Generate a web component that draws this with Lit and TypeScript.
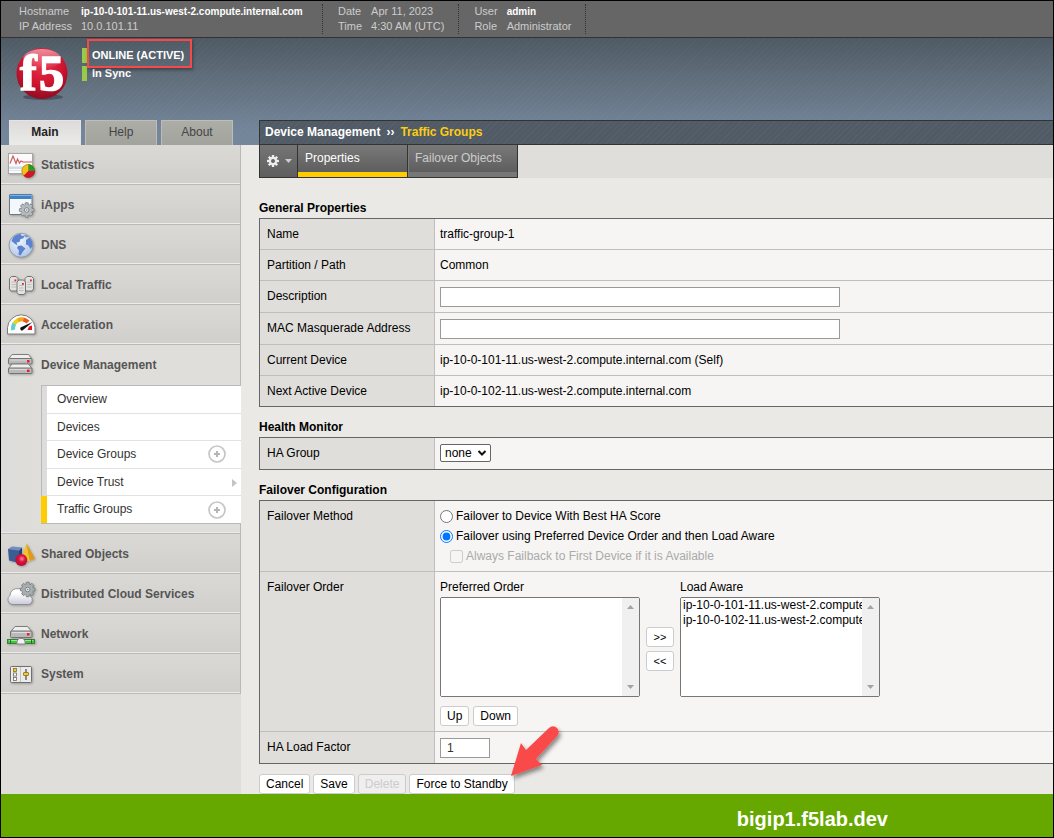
import { LitElement, html, css, svg, nothing } from "lit";
import { customElement, state } from "lit/decorators.js";
import { classMap } from "lit/directives/class-map.js";

interface NavItem {
  label: string;
  icon: string;
}

interface SubItem {
  label: string;
  add?: boolean;
  more?: boolean;
}

const navTop: NavItem[] = [
  { label: "Statistics", icon: "stats" },
  { label: "iApps", icon: "iapps" },
  { label: "DNS", icon: "dns" },
  { label: "Local Traffic", icon: "traffic" },
  { label: "Acceleration", icon: "accel" },
];

const navBottom: NavItem[] = [
  { label: "Shared Objects", icon: "shared" },
  { label: "Distributed Cloud Services", icon: "cloud" },
  { label: "Network", icon: "network" },
  { label: "System", icon: "system" },
];

const subItems: SubItem[] = [
  { label: "Overview" },
  { label: "Devices" },
  { label: "Device Groups", add: true },
  { label: "Device Trust", more: true },
  { label: "Traffic Groups", add: true },
];

const hosts = [
  "ip-10-0-101-11.us-west-2.compute.internal.com",
  "ip-10-0-102-11.us-west-2.compute.internal.com",
];

/* A toothed wheel drawn around (cx, cy). */
const gear = (cx: number, cy: number, r: number, fill: string, edge: string) => svg`
  <g transform="translate(${cx} ${cy})">
    ${[0, 45, 90, 135].map(
      (a) => svg`<rect x="-1.6" y=${-r} width="3.2" height=${r * 2} rx=".8" fill=${fill}
        stroke=${edge} stroke-width=".9" transform="rotate(${a})"/>`
    )}
    <circle r=${r - 2} fill=${fill}/>
    <circle r="2.3" fill="#e8ebeb" stroke=${edge} stroke-width=".9"/>
    <circle r=".8" fill=${edge}/>
  </g>`;

const icons: Record<string, unknown> = {
  stats: svg`
    <rect x="3.5" y="4.5" width="24" height="20" fill="#fbfbfb" stroke="#a5a5a5"/>
    <rect x="4" y="17.500" width="23" height="2.500" fill="#cfdde8"/>
    <path d="M4 21.500H27" stroke="#dfe5ea"/>
    <path d="M5 14.500L8 7L11 14.500L12.500 10L14.500 14L16 12L18 13H27" fill="none" stroke="#cf5a5e" stroke-width="1.200"/>
    <circle cx="23.300" cy="22" r="6.800" fill="#f2c21a"/>
    <path d="M23.300 22V15.200A6.800 6.800 0 0 1 30.100 22Z" fill="#2a9a20"/>
    <path d="M23.300 22H30.100A6.800 6.800 0 0 1 18.500 26.800Z" fill="#d8112c"/>
    <circle cx="23.300" cy="22" r="6.500" fill="none" stroke="#5f4a20" stroke-opacity=".55" stroke-width=".7"/>`,
  iapps: svg`
    <rect x="4.500" y="5.500" width="22.500" height="20" rx=".5" fill="#f4f7fb" stroke="#6d7780"/>
    <rect x="5" y="5.500" width="21.500" height="4.500" fill="#3f83c6"/>
    <path d="M5 6.500H26.500" stroke="#7fb2e2"/>
    ${gear(21.7, 21, 7.3, "#b4babd", "#788086")}`,
  dns: svg`
    <circle cx="16" cy="16.300" r="12" fill="url(#globe)" stroke="#8d949e" stroke-width=".9"/>
    <path d="M8 8.500C10 6 13 5 15.500 5L17 7L20 6.500L18 9.500L15.500 10L14.500 13L11.500 13.500L12.500 16.500L9.500 14.500L6.500 12Z" fill="#5c83cf"/>
    <path d="M13 17L16.500 16.500L20.500 19.500L18 22.500L15.500 26.500L13.500 25.500L14 21.500L12 19Z" fill="#5c83cf"/>
    <path d="M21 11L24.500 8.500L27 12L27.700 17L25.500 20L23.500 16.500L21 15.500Z" fill="#5c83cf"/>
    <path d="M19 6L22 6.300L23.500 8L21 8.500Z" fill="#6f94da"/>`,
  traffic: svg`
    ${[
      [4.5, 7.5],
      [20, 7.5],
      [12, 11],
    ].map(
      ([x, y]) => svg`
      <path d="M${x} ${y + 2}L${x + 2} ${y}H${x + 6.5}L${x + 8.5} ${y + 2}V${y + 12.5}L${x + 7} ${y + 14.5}H${x + 1.5}L${x} ${y + 12.5}Z"
        fill="#e2e2e0" stroke="#747474"/>
      <path d="M${x + 2} ${y + 5.5}H${x + 6.5}M${x + 2} ${y + 8}H${x + 6.5}M${x + 2} ${y + 10.5}H${x + 6.5}" stroke="#b4b4b4" stroke-width=".8"/>
      <rect x=${x + 5} y=${y + 3} width="1.800" height="1.800" fill="#e8202c"/>`
    )}`,
  accel: svg`
    <path d="M2.500 25V18.500A13.800 13.800 0 0 1 30 18.500V25Z" fill="#fdfdfd" stroke="#7c7c7c"/>
    <path d="M8.200 21A8.500 8.500 0 0 1 9.500 14.500" fill="none" stroke="#5fd0cd" stroke-width="4"/>
    <path d="M9.300 14.800A8.500 8.500 0 0 1 13 11.300" fill="none" stroke="#e8d21c" stroke-width="4"/>
    <path d="M12.800 11.400A8.500 8.500 0 0 1 18.500 10.500" fill="none" stroke="#f3a712" stroke-width="4"/>
    <path d="M18.300 10.500A8.500 8.500 0 0 1 23 13.200" fill="none" stroke="#ea5a17" stroke-width="4"/>
    <path d="M24 17.500L27 16.500V21H22.500Z" fill="#e3131d"/>
    <path d="M27.500 13L17.500 21.500A2 2 0 0 1 15.500 18.500Z" fill="#111"/>`,
  devices: svg`
    ${[5.5, 15].map(
      (y) => svg`
      <path d="M3.500 ${y + 4.5}L7 ${y}H23.500L27 ${y + 4.5}Z" fill="#eeeeec" stroke="#7d7d7d"/>
      <rect x="3.500" y=${y + 4} width="23.500" height="5.500" rx="1" fill="#b9b9b9" stroke="#747474"/>
      <path d="M5 ${y + 5.5}H25" stroke="#d9d9d9"/>
      <rect x="22" y=${y + 5.5} width="2.500" height="2.500" fill="#e8202c"/>`
    )}`,
  shared: svg`
    <path d="M21.500 5.500L16 22L25 23.500Z" fill="#f5c12b"/>
    <path d="M21.500 5.500L25 22.500L30 20.500Z" fill="#e09b14"/>
    <path d="M3 11L7 8.500L17 9.500L14 12.500Z" fill="#6f8fc0"/>
    <path d="M3 11L14 12.500V25L4 22.500Z" fill="#3b5c94"/>
    <path d="M14 12.500L17 9.500V21L14 25Z" fill="#24426f"/>
    <circle cx="16.300" cy="22" r="6" fill="url(#ball)"/>`,
  cloud: svg`
    <path d="M7 26.500A5 5 0 0 1 5 17.500A7.500 7.500 0 0 1 18.500 13.500A6.500 6.500 0 0 1 25.500 18.500A4.500 4.500 0 0 1 24 26.500Z"
      fill="url(#mist)" stroke="#8b8b95" stroke-width=".9"/>
    ${gear(22.7, 11.5, 7.3, "#a9aeaf", "#737b80")}`,
  network: svg`
    <path d="M5.500 14L10 8.500H22.500L27 14Z" fill="#eeeeec" stroke="#7d7d7d"/>
    <rect x="5.500" y="13" width="21.500" height="6.500" rx="1" fill="#b9b9b9" stroke="#747474"/>
    <path d="M7 14.500H25" stroke="#dedede"/>
    <rect x="22" y="15" width="2.500" height="2.500" fill="#e8202c"/>
    <rect x="2.500" y="21.500" width="27" height="4" fill="#3fc73a" stroke="#3e7d3c"/>
    <path d="M4 22.500H28" stroke="#94ee8c"/>
    <path d="M5.500 21V26M26.500 21V26" stroke="#2f6b2d"/>
    <path d="M12 26V23L14 20.500H18L20 23V26Z" fill="#f2f2f2" stroke="#8a8a8a"/>`,
  system: svg`
    <rect x="5.500" y="8.500" width="21" height="16" rx="1" fill="#ecebe9" stroke="#6f6f6f"/>
    <path d="M15.500 9V24" stroke="#c2c2c2"/>
    <rect x="8.500" y="10.500" width="3" height="3" fill="#f0cf2c" stroke="#806f22" stroke-width=".8"/>
    <rect x="8.500" y="15" width="3" height="3" fill="#fff" stroke="#666" stroke-width=".8"/>
    <rect x="8.500" y="19.500" width="3" height="3" fill="#fff" stroke="#666" stroke-width=".8"/>
    <path d="M21 11V22" stroke="#555" stroke-width="1.300"/>
    <rect x="18.500" y="14.500" width="5" height="3" rx=".5" fill="#f0cf2c" stroke="#806f22" stroke-width=".8"/>`,
};

const navIcon = (name: string) => html`
  <svg class="nav-icon" width="32" height="32" viewBox="0 0 32 32" aria-hidden="true">
    <defs>
      <radialGradient id="globe" cx=".4" cy=".3" r=".8">
        <stop offset="0" stop-color="#f1f6fd" /><stop offset="1" stop-color="#a9c1e8" />
      </radialGradient>
      <radialGradient id="ball" cx=".55" cy=".4" r=".6">
        <stop offset="0" stop-color="#f58a9f" /><stop offset=".45" stop-color="#dc1240" /><stop offset="1" stop-color="#b30d30" />
      </radialGradient>
      <linearGradient id="mist" x2="0" y2="1">
        <stop offset=".3" stop-color="#fff" /><stop offset="1" stop-color="#c9c9da" />
      </linearGradient>
    </defs>
    ${icons[name]}
  </svg>
`;

@customElement("app-root")
export class AppRoot extends LitElement {
  @state() private current = "Traffic Groups";
  @state() private method = "order";

  static styles = css`
    :host {
      display: flex;
      flex-direction: column;
      box-sizing: border-box;
      min-height: 100vh;
      border: 1px solid #000;
      overflow: hidden;
      font: 12px/15px "Liberation Sans", Arial, sans-serif;
      color: #000;
      background: #eae9e5;
    }
    * { box-sizing: border-box; }
    a { color: inherit; text-decoration: none; }
    button, input, select { font: inherit; color: inherit; margin: 0; }

    .topbar {
      display: flex;
      padding: 3px 0;
      background: #666;
      border-bottom: 1px solid #333;
      font-size: 11px;
      color: #ccc;
    }
    .facts {
      display: grid;
      grid-template-columns: auto 1fr;
      column-gap: 9px;
      margin: 0;
      padding: 0 14px 0 15px;
      border-right: 1px dotted #333;
    }
    .facts:first-child { padding-left: 18px; min-width: 322px; }
    .facts dd { margin: 0; }
    .facts .strong { color: #fff; font-size: 10px; font-weight: bold; }

    .shell {
      flex: 1;
      display: flex;
      flex-direction: column;
      background:
        repeating-linear-gradient(135deg, rgba(255, 255, 255, .02) 0 1px, transparent 1px 4px) 0 0 / 100% 107px no-repeat,
        linear-gradient(#4e5963, #5f6c79 35%, #73859a 85%, #74869a) 0 0 / 100% 107px no-repeat;
    }
    .masthead {
      display: flex;
      height: 82px;
      padding: 0 0 0 13px;
      gap: 12px;
    }
    .status {
      position: relative;
      display: flex;
      flex-direction: column;
      gap: 3px;
      padding-top: 10px;
      font-size: 11px;
      font-weight: bold;
      color: #fff;
    }
    .status-line {
      border-left: 5px solid #98cb4a;
      padding-left: 5px;
    }
    .callout {
      position: absolute;
      left: 5px;
      top: 1px;
      width: 105px;
      height: 29px;
      border: 2px solid #f94848;
      box-shadow: 1px 2px 3px rgba(0, 0, 0, .35);
    }
    .columns {
      flex: 1;
      display: grid;
      grid-template-columns: 240px minmax(0, 1fr);
      column-gap: 18px;
    }

    .side { display: flex; flex-direction: column; }
    .side-tabs { display: flex; gap: 4px; padding-left: 8px; }
    .side-tab {
      width: 72px;
      height: 25px;
      padding: 0 0 2px;
      border: 1px solid #bdbcb8;
      border-bottom: 0;
      background: linear-gradient(#adada8, #a3a39e);
      color: #444;
    }
    .side-tab.on {
      border-color: #e4e4e2;
      background: linear-gradient(#dcdbd9, #ebebe9);
      font-weight: bold;
      color: #222;
    }
    .side-body {
      flex: 1;
      background: #dfdeda;
    }
    .nav {
      border-right: 1px solid #b9b9b9;
      list-style: none;
      margin: 0;
      padding: 0;
    }
    .nav-link {
      display: flex;
      align-items: center;
      gap: 4px;
      height: 40px;
      padding-left: 4px;
      border-bottom: 1px solid #b9b9b9;
      box-shadow: inset 0 -1px #ecebe9;
      background: linear-gradient(#dad9d6, #d0cfcc);
      font-weight: bold;
      color: #555;
    }
    .nav-label { padding-top: 2px; }
    .nav-icon { filter: drop-shadow(1px 1px 1px rgba(0, 0, 0, .25)); }
    .open {
      padding-bottom: 9px;
      border-bottom: 1px solid #b9b9b9;
      box-shadow: inset 0 -1px #ecebe9;
      background: linear-gradient(90deg, #dcdcdb, #dfdeda 40px);
    }
    .open > .nav-link { background: none; border-color: transparent; box-shadow: none; }
    .sub {
      list-style: none;
      margin: 0 -1px 0 40px;
      padding: 0;
      border: solid #b9b9b9;
      border-width: 1px 0 1px 1px;
      background: #fff;
    }
    .sub-link {
      display: flex;
      align-items: center;
      height: 28px;
      padding: 0 4px 2px 10px;
      border-left: 5px solid #dcdcdc;
      color: #333;
      background: linear-gradient(#e2e2e2, #e2e2e2) 0 100% / 100% 1px no-repeat, #fff;
    }
    .sub li:nth-child(even) .sub-link { height: 27px; padding-bottom: 0; }
    .sub li:last-child .sub-link { height: 27px; padding-bottom: 0; background: #fff; }
    .sub-link.on {
      margin-left: -1px;
      border-left: 6px solid #fc0;
    }
    .sub-label { flex: 1; }
    .plus { margin-right: 11px; }

    .crumbs {
      display: flex;
      gap: 6px;
      height: 25px;
      padding: 4px 5px;
      border: 1px solid #333;
      border-right: 0;
      background:
        repeating-linear-gradient(135deg, rgba(255, 255, 255, .03) 0 1px, transparent 1px 4px),
        #505b66;
      font-weight: bold;
      color: #fff;
    }
    .here { color: #fc1; }
    .tabstrip { display: flex; background: #dfdeda; height: 33px; }
    .tab {
      height: 33px;
      width: 110px;
      padding: 6px 7px;
      border: solid #333;
      border-width: 0 1px 1px 0;
      background: linear-gradient(#797979, #5e5e5e 27px, #777 27px);
      box-shadow: inset 1px 0 #7d7d7d;
      color: #ccc;
    }
    .tab.on {
      color: #fff;
      background: linear-gradient(#797979, #5e5e5e 27px, #fc0 27px);
      box-shadow: none;
    }
    .gear {
      width: 39px;
      height: 33px;
      padding: 0 0 0 6px;
      border: solid #333;
      border-width: 0 1px 1px 1px;
      background: linear-gradient(#757575, #5e5e5e);
      display: flex;
      align-items: center;
      gap: 5px;
    }

    .panel { padding-top: 10px; }
    .panel h2 {
      margin: 13px 0 2px;
      font-size: 12px;
      line-height: 15px;
    }
    .props {
      width: 100%;
      border-spacing: 0;
      border: solid #666;
      border-width: 1px 0 1px 1px;
    }
    .props th, .props td {
      vertical-align: top;
      text-align: left;
      border-bottom: 1px solid #bebebc;
    }
    .props th {
      width: 175px;
      padding: 8px 7px 7px;
      border-right: 1px solid #bebebc;
      background: #dfdeda;
      font-weight: normal;
    }
    .props td { padding: 8px 5px 7px; background: #f6f5f3; }
    .props td.ctl { padding: 6px 5px 5px; }
    .props td.opts { padding: 5px; }
    .props td.order { padding-bottom: 5px; }
    .props tr:last-child > * { border-bottom: 0; }
    .box {
      display: block;
      height: 20px;
      width: 400px;
      max-width: 100%;
      padding: 0 6px;
      border: 1px solid #999;
      background: #fff;
      color: #333;
    }
    .box.short { width: 50px; }
    .pick { position: relative; display: flex; width: 51px; margin-bottom: 2px; }
    .pick select {
      appearance: none;
      width: 100%;
      height: 18px;
      padding: 0 4px;
      border: 1px solid #666;
      border-radius: 2px;
      background: #fff;
    }
    .chev { position: absolute; right: 4px; top: 5px; pointer-events: none; }
    .opt { display: flex; align-items: center; gap: 3px; height: 20px; }
    .opt input { width: 13px; height: 13px; }
    .opt.sub-opt { padding-left: 10px; color: #aaa; }

    .lists { display: flex; gap: 6px; }
    .list { display: flex; flex-direction: column; gap: 2px; width: 200px; }
    .listbox {
      display: flex;
      height: 100px;
      border: 1px solid #767676;
      border-radius: 2px;
      background: #fff;
      overflow: hidden;
    }
    .listbox select {
      flex: 1;
      min-width: 0;
      padding: 0;
      border: 0;
      border-radius: 0;
      background: #fff;
      overflow: hidden;
      outline: none;
    }
    .listbox option { padding: 0 2px; min-height: 15px; line-height: 15px; color: #000; }
    .track {
      display: flex;
      flex-direction: column;
      justify-content: space-between;
      align-items: center;
      width: 17px;
      padding: 7px 0;
      background: #f0f0f0;
    }
    .moves {
      display: flex;
      flex-direction: column;
      justify-content: center;
      gap: 4px;
      padding-top: 21px;
    }
    .btn {
      height: 20px;
      padding: 0 6px;
      border: 1px solid #ccc;
      border-radius: 3px;
      background: #fff;
      white-space: nowrap;
    }
    .btn:disabled { background: #efefef; color: #ccc; }
    .move { width: 28px; padding: 0; font-size: 11px; line-height: 15px; }
    .sorts { display: flex; gap: 4px; padding-top: 9px; }
    .actions { display: flex; gap: 3px; padding-top: 10px; }
    .pointed { position: relative; display: flex; }
    .arrow { position: absolute; right: -52px; top: -54px; pointer-events: none; }

    .footer {
      height: 43px;
      padding: 13px 165px 0 0;
      background: #66a800;
      color: #fff;
      font-size: 20px;
      line-height: 24px;
      font-weight: bold;
      text-align: right;
    }
  `;

  private navRow(item: NavItem) {
    return html`<li><a class="nav-link" href="#">${navIcon(item.icon)}<span class="nav-label">${item.label}</span></a></li>`;
  }

  private subRow(item: SubItem) {
    return html`<li>
      <a class=${classMap({ "sub-link": true, on: item.label === this.current })} href="#"
        @click=${() => (this.current = item.label)}>
        <span class="sub-label">${item.label}</span>
        ${item.add
          ? html`<svg class="plus" width="18" height="18" viewBox="0 0 18 18" aria-hidden="true">
              <circle cx="9" cy="9" r="8" fill="none" stroke="#c6c6c6" stroke-width="1.700" />
              <path d="M6 9H12M9 6V12" stroke="#b5b5b5" stroke-width="2" />
            </svg>`
          : nothing}
        ${item.more
          ? html`<svg width="5" height="8" viewBox="0 0 5 8" aria-hidden="true"><path d="M0 0L5 4L0 8Z" fill="#c4c4c4" /></svg>`
          : nothing}
      </a>
    </li>`;
  }

  private listBox(id: string, label: string, items: string[]) {
    return html`<div class="list">
      <label for=${id}>${label}</label>
      <div class="listbox">
        <select id=${id} multiple>${items.map((h) => html`<option>${h}</option>`)}</select>
        <span class="track">
          <svg width="7" height="4" viewBox="0 0 7 4"><path d="M0 4L3.500 0L7 4Z" fill="#a3a3a3" /></svg>
          <svg width="7" height="4" viewBox="0 0 7 4"><path d="M0 0L3.500 4L7 0Z" fill="#a3a3a3" /></svg>
        </span>
      </div>
    </div>`;
  }

  render() {
    return html`
      <header class="topbar">
        <dl class="facts">
          <dt>Hostname</dt><dd class="strong">${hosts[0]}</dd>
          <dt>IP Address</dt><dd>10.0.101.11</dd>
        </dl>
        <dl class="facts">
          <dt>Date</dt><dd>Apr 11, 2023</dd>
          <dt>Time</dt><dd>4:30 AM (UTC)</dd>
        </dl>
        <dl class="facts">
          <dt>User</dt><dd class="strong">admin</dd>
          <dt>Role</dt><dd>Administrator</dd>
        </dl>
      </header>

      <div class="shell">
        <div class="masthead">
          <svg width="56" height="76" viewBox="0 -8 56 76" role="img" aria-label="f5">
            <defs>
              <radialGradient id="red" cx=".5" cy=".3" r=".7">
                <stop offset="0" stop-color="#e8344c" /><stop offset=".6" stop-color="#cf1430" /><stop offset="1" stop-color="#8f0c20" />
              </radialGradient>
              <linearGradient id="shine" x2="0" y2="1">
                <stop offset="0" stop-color="#fff" stop-opacity=".5" /><stop offset="1" stop-color="#fff" stop-opacity="0" />
              </linearGradient>
            </defs>
            <ellipse cx="29" cy="51" rx="20" ry="3" fill="#333d47" opacity=".6" />
            <circle cx="28" cy="27.500" r="25.500" fill="url(#red)" />
            <ellipse cx="28" cy="13" rx="19" ry="10" fill="url(#shine)" />
            <text x="6" y="44" font-family="Liberation Serif, serif" font-weight="bold" font-size="50" fill="#fff"
              stroke="#fff" stroke-width="1.500">f</text>
            <text x="25" y="44" font-family="Liberation Serif, serif" font-weight="bold" font-size="50" fill="#fff"
              stroke="#fff" stroke-width="1.500">5</text>
          </svg>
          <div class="status">
            <span class="status-line">ONLINE (ACTIVE)</span>
            <span class="status-line">In Sync</span>
            <span class="callout"></span>
          </div>
        </div>

        <div class="columns">
          <aside class="side">
            <div class="side-tabs">
              <button class="side-tab on">Main</button>
              <button class="side-tab">Help</button>
              <button class="side-tab">About</button>
            </div>
            <nav class="side-body">
              <ul class="nav">
                ${navTop.map((i) => this.navRow(i))}
                <li class="open">
                  <a class="nav-link" href="#">${navIcon("devices")}<span class="nav-label">Device Management</span></a>
                  <ul class="sub">${subItems.map((i) => this.subRow(i))}</ul>
                </li>
                ${navBottom.map((i) => this.navRow(i))}
              </ul>
            </nav>
          </aside>

          <main>
            <div class="crumbs">
              <span>Device Management</span><span>››</span><span class="here">Traffic Groups</span>
            </div>
            <div class="tabstrip">
              <button class="gear" aria-label="Options">
                <svg width="14" height="14" viewBox="-7 -7 14 14" aria-hidden="true">
                  ${[0, 45, 90, 135].map(
                    (a) => svg`<rect x="-1.200" y="-6" width="2.400" height="12" fill="#eee" transform="rotate(${a})"/>`
                  )}
                  <circle r="4.200" fill="#eee" /><circle r="2" fill="#666" />
                </svg>
                <svg width="7" height="4" viewBox="0 0 7 4" aria-hidden="true"><path d="M0 0H7L3.500 4Z" fill="#ccc" /></svg>
              </button>
              <a class="tab on" href="#">Properties</a>
              <a class="tab" href="#">Failover Objects</a>
            </div>

            <form class="panel" @submit=${(e: Event) => e.preventDefault()}>
              <h2>General Properties</h2>
              <table class="props">
                <tr><th scope="row">Name</th><td>traffic-group-1</td></tr>
                <tr><th scope="row">Partition / Path</th><td>Common</td></tr>
                <tr>
                  <th scope="row"><label for="desc">Description</label></th>
                  <td class="ctl"><input class="box" id="desc" type="text" /></td>
                </tr>
                <tr>
                  <th scope="row"><label for="mac">MAC Masquerade Address</label></th>
                  <td class="ctl"><input class="box" id="mac" type="text" /></td>
                </tr>
                <tr><th scope="row">Current Device</th><td>${hosts[0]} (Self)</td></tr>
                <tr><th scope="row">Next Active Device</th><td>${hosts[1]}</td></tr>
              </table>

              <h2>Health Monitor</h2>
              <table class="props">
                <tr>
                  <th scope="row"><label for="ha">HA Group</label></th>
                  <td class="ctl">
                    <span class="pick">
                      <select id="ha"><option>none</option></select>
                      <svg class="chev" width="10" height="8" viewBox="0 0 10 8" aria-hidden="true">
                        <path d="M1.500 2L5 5.500L8.500 2" fill="none" stroke="#111" stroke-width="2" />
                      </svg>
                    </span>
                  </td>
                </tr>
              </table>

              <h2>Failover Configuration</h2>
              <table class="props">
                <tr>
                  <th scope="row">Failover Method</th>
                  <td class="opts">
                    <label class="opt">
                      <input type="radio" name="method" .checked=${this.method === "score"}
                        @change=${() => (this.method = "score")} />
                      Failover to Device With Best HA Score
                    </label>
                    <label class="opt">
                      <input type="radio" name="method" .checked=${this.method === "order"}
                        @change=${() => (this.method = "order")} />
                      Failover using Preferred Device Order and then Load Aware
                    </label>
                    <label class="opt sub-opt">
                      <input type="checkbox" disabled />
                      Always Failback to First Device if it is Available
                    </label>
                  </td>
                </tr>
                <tr>
                  <th scope="row">Failover Order</th>
                  <td class="order">
                    <div class="lists">
                      ${this.listBox("preferred", "Preferred Order", [])}
                      <div class="moves">
                        <button class="btn move" type="button">&gt;&gt;</button>
                        <button class="btn move" type="button">&lt;&lt;</button>
                      </div>
                      ${this.listBox("aware", "Load Aware", hosts)}
                    </div>
                    <div class="sorts">
                      <button class="btn" type="button">Up</button>
                      <button class="btn" type="button">Down</button>
                    </div>
                  </td>
                </tr>
                <tr>
                  <th scope="row"><label for="factor">HA Load Factor</label></th>
                  <td class="ctl"><input class="box short" id="factor" type="text" value="1" /></td>
                </tr>
              </table>

              <div class="actions">
                <button class="btn" type="button">Cancel</button>
                <button class="btn" type="button">Save</button>
                <button class="btn" type="button" disabled>Delete</button>
                <span class="pointed">
                  <button class="btn" type="button">Force to Standby</button>
                  <svg class="arrow" width="62" height="62" viewBox="0 0 62 62" aria-hidden="true">
                    <defs>
                      <filter id="soft" x="-20%" y="-20%" width="150%" height="150%">
                        <feDropShadow dx="2" dy="3" stdDeviation="2" flood-color="#000" flood-opacity=".45" />
                      </filter>
                    </defs>
                    <g filter="url(#soft)" fill="#f94848">
                      <path d="M6 56L16 23L21 30L44 8A5.500 5.500 0 0 1 52 16L31 39L37 45Z" />
                    </g>
                  </svg>
                </span>
              </div>
            </form>
          </main>
        </div>
      </div>

      <footer class="footer">bigip1.f5lab.dev</footer>
    `;
  }
}
